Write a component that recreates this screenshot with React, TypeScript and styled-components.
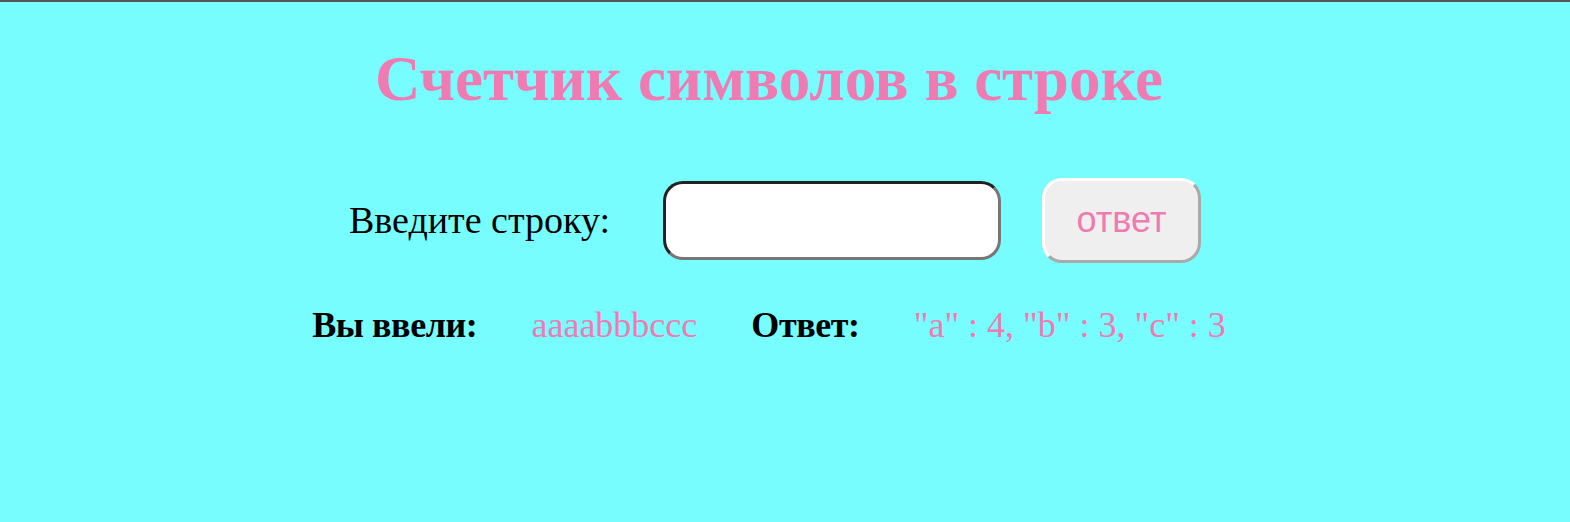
import styled, { createGlobalStyle } from "styled-components";
import { useState } from "react";

const GlobalStyle = createGlobalStyle`
  html, body {
    margin: 0;
    padding: 0;
    height: 100%;
  }
  body {
    background-color: #78fdff;
    border-top: 2px solid #555555;
    font-family: "Liberation Serif", "Times New Roman", serif;
  }
`;

const pink = "#f07ab2";

const Page = styled.div`
  display: flex;
  flex-direction: column;
  align-items: center;
  padding-right: 32px;
`;

const Title = styled.h1`
  margin: 40px 0 0;
  font-size: 63px;
  font-weight: bold;
  color: ${pink};
  line-height: 1.2;
`;

const Form = styled.div`
  display: flex;
  align-items: center;
  margin: 60px 0 0 12px;
`;

const Label = styled.label`
  font-size: 38px;
  color: black;
  margin-right: 53px;
`;

const Input = styled.input`
  box-sizing: border-box;
  width: 338px;
  height: 79px;
  border-radius: 20px;
  border: 3px solid;
  border-color: #222 #777 #777 #222;
  background: white;
  font-size: 28px;
  padding: 0 16px;
  outline: none;
`;

const Button = styled.button`
  margin-left: 41px;
  box-sizing: border-box;
  width: 159px;
  height: 85px;
  border-radius: 20px;
  border: 3px solid;
  border-color: #fff #aaa #aaa #fff;
  background: #efefef;
  color: ${pink};
  font-family: "Liberation Sans", Arial, sans-serif;
  font-size: 36px;
  cursor: pointer;
`;

const Result = styled.div`
  display: flex;
  align-items: baseline;
  gap: 54px;
  margin-top: 41px;
  font-size: 36px;
`;

const Caption = styled.b`
  color: black;
  letter-spacing: -0.4px;
`;

const Value = styled.span`
  color: ${pink};
`;

const count = (s: string) => {
  const map: Record<string, number> = {};
  for (const ch of s) map[ch] = (map[ch] || 0) + 1;
  return Object.entries(map)
    .map(([k, v]) => `"${k}" : ${v}`)
    .join(", ");
};

const App = () => {
  const [text, setText] = useState("");
  const [entered, setEntered] = useState("aaaabbbccc");

  const answerClicked = () => {
    if (text) {
      setEntered(text);
      setText("");
    }
  };

  return (
    <>
      <GlobalStyle />
      <Page>
        <Title>Счетчик символов в строке</Title>
        <Form>
          <Label>Введите строку:</Label>
          <Input value={text} onChange={(e) => setText(e.target.value)} />
          <Button onClick={answerClicked}>ответ</Button>
        </Form>
        <Result>
          <Caption>Вы ввели:</Caption>
          <Value>{entered}</Value>
          <Caption>Ответ:</Caption>
          <Value>{count(entered)}</Value>
        </Result>
      </Page>
    </>
  );
};

export default App;
